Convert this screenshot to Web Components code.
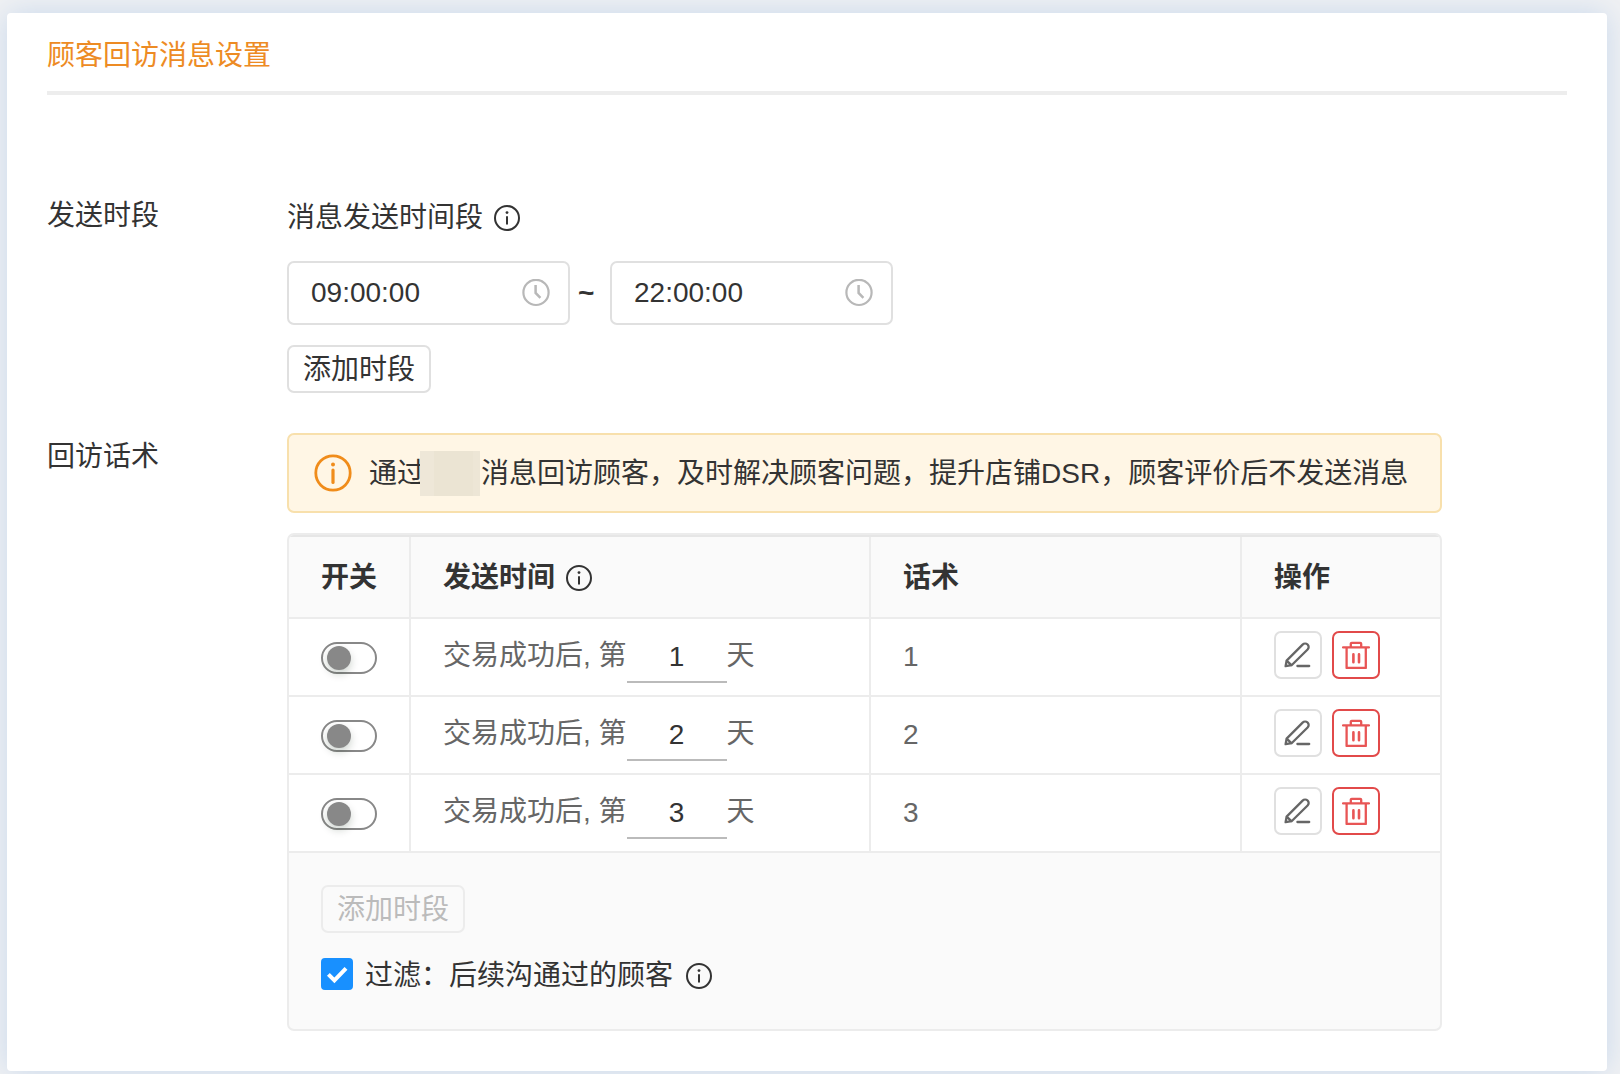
<!DOCTYPE html>
<html lang="zh-CN">
<head>
<meta charset="utf-8">
<title>顾客回访消息设置</title>
<style>
  * { box-sizing: border-box; }
  body {
    margin: 0;
    padding: 13px 13px 3px 7px;
    background: #f0f1f3;
    color: #333;
    font: 28px/44px "Liberation Sans", "Noto Sans CJK SC", sans-serif;
  }
</style>
</head>
<body>
<settings-card heading="顾客回访消息设置">
  <form-row label="发送时段">
    <send-period></send-period>
  </form-row>
  <form-row label="回访话术">
    <tip-alert>通过<masked-text></masked-text>消息回访顾客，及时解决顾客问题，提升店铺DSR，顾客评价后不发送消息</tip-alert>
    <script-table></script-table>
  </form-row>
</settings-card>

<script>
const BASE = `*{box-sizing:border-box} input,button{font:inherit;color:inherit;margin:0}`;

function define(name, render) {
  customElements.define(name, class extends HTMLElement {
    constructor() {
      super();
      this.attachShadow({ mode: "open" });
    }
    connectedCallback() {
      const t = document.createElement("template");
      t.innerHTML = render(this);
      this.shadowRoot.replaceChildren(t.content.cloneNode(true));
    }
  });
}

define("info-icon", () => `
  <style>
    :host{display:inline-flex;flex:none;width:28px;height:28px}
    svg{width:100%;height:100%}
  </style>
  <svg viewBox="0 0 28 28" fill="none" stroke="currentColor" aria-hidden="true">
    <circle cx="14" cy="14" r="12" stroke-width="2"/>
    <path d="M14 12.2V20.5" stroke-width="2"/>
    <circle cx="14" cy="8.6" r="1.4" fill="currentColor" stroke="none"/>
  </svg>`);

define("masked-text", () => `
  <style>
    :host{display:inline-block;position:relative;width:56px;height:44px;vertical-align:top}
    i{position:absolute;inset:-1px 1px 0 -5px;background:linear-gradient(90deg,#eee7d8 24%,#ebe4d3 24%,#ebe4d3 88%,#ede6d6 88%)}
  </style><i></i>`);

define("settings-card", el => `
  <style>${BASE}
    :host{display:block;background:#fff;border-radius:4px;padding:21px 40px 40px;box-shadow:0 0 30px #c8d8ec}
    h2{margin:0 0 97px;padding-bottom:13px;border-bottom:4px solid #ededed;font:inherit;color:#ed8b24}
    .rows{display:flex;flex-direction:column;gap:40px}
  </style>
  <h2>${el.getAttribute("heading")}</h2>
  <div class="rows"><slot></slot></div>`);

define("form-row", el => `
  <style>${BASE}
    :host{display:flex}
    h3{flex:none;width:240px;margin:0;padding-top:2px;font:inherit}
    .body{flex:1;min-width:0;margin-right:125px;display:flex;flex-direction:column;gap:20px}
  </style>
  <h3>${el.getAttribute("label")}</h3>
  <div class="body"><slot></slot></div>`);

define("time-field", el => `
  <style>${BASE}
    :host{display:flex;align-items:center;width:283px;height:64px;border:2px solid #e0e0e0;border-radius:7px;padding:0 18px 0 22px;background:#fff}
    input{flex:1;min-width:0;border:0;padding:0;outline:0;background:none;height:44px}
    svg{flex:none;width:28px;height:28px}
  </style>
  <input type="text" value="${el.getAttribute("value")}" aria-label="${el.getAttribute("label")}">
  <svg viewBox="0 0 28 28" fill="none" stroke="#b8b8b8" stroke-width="2.2" aria-hidden="true">
    <circle cx="14" cy="13.4" r="12.6"/><path d="M13.6 6V14L18.4 18.8" stroke-width="2.5"/>
  </svg>`);

define("outline-button", el => `
  <style>${BASE}
    :host{display:inline-flex;align-self:flex-start}
    button{height:48px;padding:2px 14px 0;border:2px solid #e0e0e0;border-radius:7px;background:#fff;line-height:42px;white-space:nowrap}
    button:disabled{color:#bbb;background:#fafafa;border-color:#ececec}
  </style>
  <button type="button" ${el.hasAttribute("disabled") ? "disabled" : ""}><slot></slot></button>`);

define("send-period", () => `
  <style>${BASE}
    :host{display:flex;flex-direction:column;gap:20px;padding-top:4px}
    .head{display:flex;align-items:center;gap:10px;padding-bottom:1px}
    .range{display:flex;align-items:center}
    .range span{width:40px;padding-left:8px;font-weight:700}
  </style>
  <div class="head"><span>消息发送时间段</span><info-icon></info-icon></div>
  <div class="range">
    <time-field value="09:00:00" label="开始时间"></time-field><span>~</span><time-field value="22:00:00" label="结束时间"></time-field>
  </div>
  <outline-button>添加时段</outline-button>`);

define("tip-alert", () => `
  <style>${BASE}
    :host{display:flex;align-items:center;height:80px;gap:17px;padding:0 0 0 25px;border:2px solid #f8e0ac;border-radius:7px;background:#fff6e5;white-space:nowrap}
    svg{flex:none;width:38px;height:38px}
    div{padding-top:2px}
  </style>
  <svg viewBox="0 0 38 38" fill="none" stroke="#f08c1a" stroke-width="2.8" aria-hidden="true">
    <circle cx="19" cy="19" r="17.2"/><path d="M19 16V28.5" stroke-width="3.2" stroke-linecap="round"/>
    <circle cx="19" cy="10.6" r="2" fill="#f08c1a" stroke="none"/>
  </svg>
  <div><slot></slot></div>`);

define("toggle-switch", el => `
  <style>${BASE}
    :host{display:flex}
    input{appearance:none;display:flex;align-items:center;width:56px;height:32px;padding:0 4px;border:2px solid #888;border-radius:16px;background:#fff}
    input::before{content:"";width:24px;height:24px;border-radius:50%;background:#888;box-shadow:0 4px 8px rgba(0,35,11,.2)}
    input:checked{justify-content:flex-end}
  </style>
  <input type="checkbox" role="switch" aria-label="${el.getAttribute("label")}">`);

define("day-offset", el => `
  <style>${BASE}
    :host{display:flex;align-items:flex-start;height:52px;line-height:50px;white-space:nowrap}
    input{width:100px;height:52px;padding:2px 0 0;border:0;border-bottom:2px solid #bbb;background:none;text-align:center;color:#333;outline:0;border-radius:0}
  </style>
  <label for="day">交易成功后, 第</label><input id="day" type="text" value="${el.getAttribute("value")}"><span>天</span>`);

const GLYPHS = {
  edit: `<path d="M1.6 25.2L2.6 19.6L18.6 3.6C20 2.2 22.2 2.2 23.6 3.5C25 4.9 25 7.1 23.6 8.5L7.6 24.2ZM2.6 19.6L7.4 24.2"/><path d="M13.4 25H25.2"/>`,
  remove: `<path d="M1 6.4H27M8.8 6V2.8Q8.8 1.8 9.8 1.8H18.2Q19.2 1.8 19.2 2.8V6M4.6 6.4V27H23.8V6.4"/><path d="M11.4 13.4V21.2M17 13.4V21.2" stroke-width="2.6"/>`
};
define("icon-button", el => `
  <style>${BASE}
    :host{display:inline-flex}
    button{display:flex;align-items:center;justify-content:center;width:48px;height:48px;padding:0;border:2px solid #e0e0e0;border-radius:7px;background:#fff;color:#666}
    :host([kind=remove]) button{border-color:#e24a4a;color:#e85555}
    svg{width:28px;height:28px}
  </style>
  <button type="button" aria-label="${el.getAttribute("label")}">
    <svg viewBox="0 0 28 28" fill="none" stroke="currentColor" stroke-width="2.3" stroke-linejoin="round" stroke-linecap="round">${GLYPHS[el.getAttribute("kind")]}</svg>
  </button>`);

define("check-option", () => `
  <style>${BASE}
    :host{display:flex;align-items:center;height:32px}
    .box{display:grid;flex:none;width:32px;height:32px;margin-right:12px}
    .box>*{grid-area:1/1}
    input{appearance:none;width:32px;height:32px;border:2px solid #d0d0d0;border-radius:4px;background:#fff}
    input:checked{background:#1890ff;border-color:#1890ff}
    svg{width:32px;height:32px;pointer-events:none;visibility:hidden}
    input:checked + svg{visibility:visible}
    label{padding-top:4px}
    .after{display:flex;margin-left:12px;padding-top:4px;line-height:0}
  </style>
  <span class="box"><input id="c" type="checkbox" checked>
    <svg viewBox="0 0 32 32" fill="none" stroke="#fff" stroke-width="4"><path d="M7.4 16.4L13.4 22.4L25 10.4"/></svg></span>
  <label for="c"><slot></slot></label><span class="after"><slot name="after"></slot></span>`);

define("script-table", () => `
  <style>${BASE}
    :host{display:block;border:2px solid #ececec;border-radius:7px;background:#fafafa;overflow:hidden}
    table{width:100%;table-layout:fixed;border-collapse:separate;border-spacing:0;border-top:2px solid #e6e6e6}
    .c1{width:122px}.c3{width:371px}.c4{width:198px}
    th,td{padding:0 0 0 32px;text-align:left;border-right:2px solid #ececec;border-bottom:2px solid #ececec}
    th:last-child,td:last-child{border-right:0}
    th{height:82px;padding-top:2px;font-weight:700}
    .h{display:flex;align-items:center;gap:10px}
    td{height:78px;background:#fff;color:#666}
    td:first-child{padding-top:2px}
    .acts{display:flex;gap:10px;padding-bottom:4px}
    footer{display:flex;flex-direction:column;gap:25px;padding:32px 32px 39px}
  </style>
  <table>
    <colgroup><col class="c1"><col><col class="c3"><col class="c4"></colgroup>
    <thead><tr><th>开关</th><th><span class="h">发送时间<info-icon></info-icon></span></th><th>话术</th><th>操作</th></tr></thead>
    <tbody>${[1, 2, 3].map(n => `
      <tr>
        <td><toggle-switch label="开关 ${n}"></toggle-switch></td>
        <td><day-offset value="${n}"></day-offset></td>
        <td>${n}</td>
        <td><div class="acts"><icon-button kind="edit" label="编辑"></icon-button><icon-button kind="remove" label="删除"></icon-button></div></td>
      </tr>`).join("")}
    </tbody>
  </table>
  <footer>
    <outline-button disabled>添加时段</outline-button>
    <check-option>过滤：后续沟通过的顾客<info-icon slot="after"></info-icon></check-option>
  </footer>`);
</script>
</body>
</html>
